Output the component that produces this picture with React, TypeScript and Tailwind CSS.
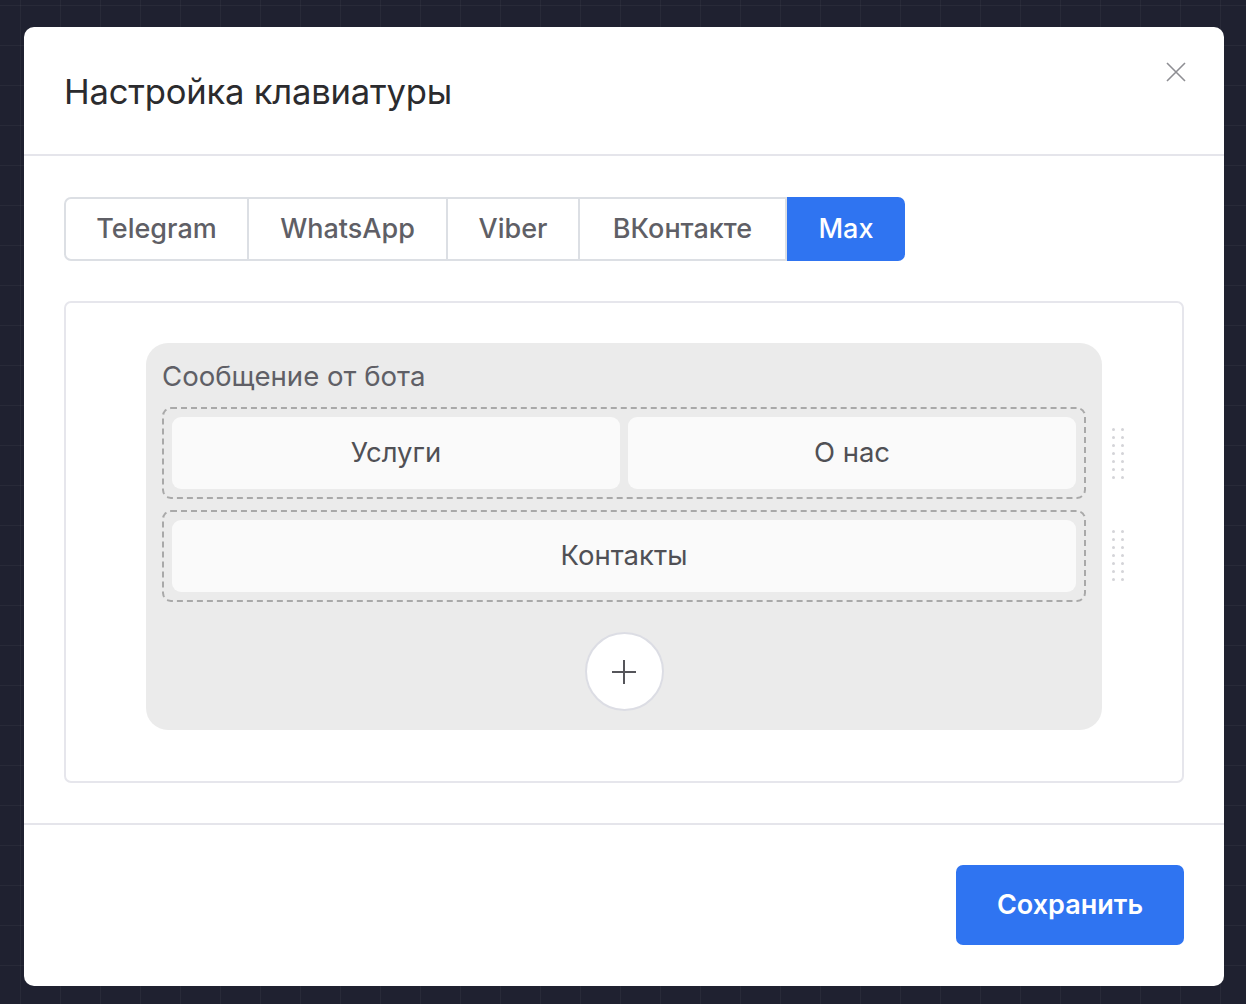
import React from "react";

const font = { fontFamily: "Inter, 'Noto Sans', sans-serif" };

function DragHandle() {
  return (
    <div className="grid grid-cols-2 gap-x-[6px] gap-y-[5px] w-[12px]">
      {Array.from({ length: 14 }).map((_, i) => (
        <span key={i} className="block w-[3px] h-[3px] rounded-full bg-[#d4d4d8]" />
      ))}
    </div>
  );
}

const tabs: { label: string; w: string }[] = [
  { label: "Telegram", w: "w-[185px]" },
  { label: "WhatsApp", w: "w-[199px]" },
  { label: "Viber", w: "w-[132px]" },
  { label: "ВКонтакте", w: "w-[207px]" },
  { label: "Max", w: "w-[118px]" },
];

export default function App() {
  return (
    <div
      className="w-[1246px] h-[1004px] bg-[#1f2130] flex justify-start pl-[24px] pt-[27px] overflow-hidden"
      style={{
        ...font,
        backgroundImage:
          "linear-gradient(to right, rgba(255,255,255,0.04) 1px, transparent 1px), linear-gradient(to bottom, rgba(255,255,255,0.04) 1px, transparent 1px)",
        backgroundSize: "40px 40px",
        backgroundPosition: "20px 5px",
      }}
    >
      <div className="w-[1200px] h-[959px] bg-white rounded-[10px] flex flex-col">
        {/* header */}
        <div className="relative h-[129px] border-b-2 border-[#e5e5eb] flex items-center px-[40px]">
          <h1 className="mt-[0px] text-[34.6px] leading-[42px] text-[#2b2b2e] font-normal tracking-[-0.2px]">
            Настройка клавиатуры
          </h1>
          <button className="absolute right-[38px] top-[35px] text-[#8e8e93]">
            <svg width="20" height="20" viewBox="0 0 20 20" fill="none" stroke="currentColor" strokeWidth="1.6">
              <path d="M1 1 L19 19 M19 1 L1 19" />
            </svg>
          </button>
        </div>
        {/* body */}
        <div className="flex-1 px-[40px] pt-[41px] border-b-2 border-[#e5e5eb]">
          <div className="flex">
            {tabs.map((t, i) => {
              const active = t.label === "Max";
              const base = `${t.w} h-[64px] flex items-center justify-center text-[27px] font-medium `;
              return (
                <div
                  key={t.label}
                  className={
                    active
                      ? base + "text-white bg-[#2f74f1] rounded-r-[7px]"
                      : i === 0
                      ? base + "text-[#5f5f66] border-2 border-[#dcdfe4] rounded-l-[7px]"
                      : base + "text-[#5f5f66] border-2 border-l-0 border-[#dcdfe4]"
                  }
                >
                  {t.label}
                </div>
              );
            })}
          </div>
          <div className="mt-[40px] h-[482px] border-2 border-[#e6e6ec] rounded-[7px] flex justify-center pt-[40px]">
            <div className="relative w-[956px] h-[387px] bg-[#ebebeb] rounded-[22px] px-[16px] pt-[16px]">
              <div className="text-[27.6px] leading-[35px] text-[#5f5f66]">Сообщение от бота</div>
              <div className="mt-[13px] flex flex-col gap-[11px]">
                <div className="border-2 border-dashed border-[#a9a9a9] rounded-[9px] p-[8px] flex gap-[8px]">
                  <div className="flex-1 h-[72px] bg-[#fafafa] rounded-[9px] flex items-center justify-center text-[27.5px] text-[#505055]">
                    Услуги
                  </div>
                  <div className="flex-1 h-[72px] bg-[#fafafa] rounded-[9px] flex items-center justify-center text-[27.5px] text-[#505055]">
                    О нас
                  </div>
                </div>
                <div className="border-2 border-dashed border-[#a9a9a9] rounded-[9px] p-[8px] flex gap-[8px]">
                  <div className="flex-1 h-[72px] bg-[#fafafa] rounded-[9px] flex items-center justify-center text-[27.5px] text-[#505055]">
                    Контакты
                  </div>
                </div>
              </div>
              <div className="flex justify-center mt-[30px]">
                <div className="w-[79px] h-[79px] rounded-full bg-white border-2 border-[#dcdde4] flex items-center justify-center text-[#55555a]">
                  <svg width="26" height="26" viewBox="0 0 26 26" stroke="currentColor" strokeWidth="2">
                    <path d="M13 1 V25 M1 13 H25" />
                  </svg>
                </div>
              </div>
              <div className="absolute left-[966px] top-[85px]">
                <DragHandle />
              </div>
              <div className="absolute left-[966px] top-[187px]">
                <DragHandle />
              </div>
            </div>
          </div>
        </div>
        {/* footer */}
        <div className="h-[161px] flex justify-end items-start pt-[40px] px-[40px]">
          <button className="w-[228px] h-[80px] bg-[#2f74f1] rounded-[7px] text-white text-[27px] font-semibold">
            Сохранить
          </button>
        </div>
      </div>
    </div>
  );
}
